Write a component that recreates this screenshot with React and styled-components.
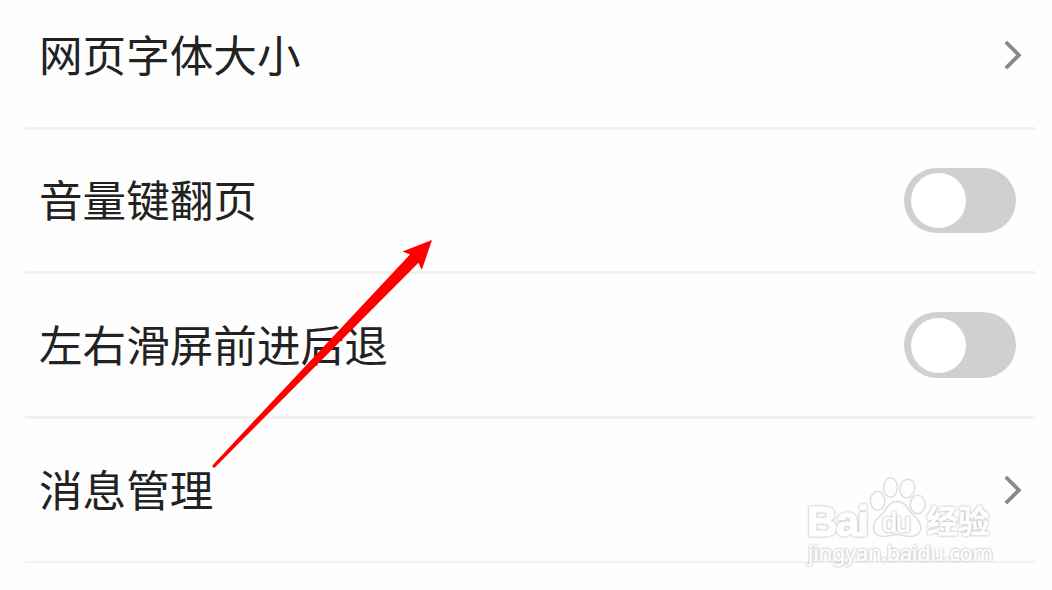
import React from "react";
import styled, { createGlobalStyle } from "styled-components";

const rows = [
  { label: "网页字体大小", type: "link", height: 130, padBottom: 17, line: 3 },
  { label: "音量键翻页", type: "switch", height: 144, padBottom: 0, line: 3, size: 65 },
  { label: "左右滑屏前进后退", type: "switch", height: 145, padBottom: 0, line: 3, size: 66 },
  { label: "消息管理", type: "link", height: 144, padBottom: 0, line: 2 },
];

function Chevron() {
  return (
    <ChevronStyled viewBox="0 0 20 32">
      <path d="M2.8 3L15.9 16.2L2.8 29.2" />
    </ChevronStyled>
  );
}

function Arrow() {
  return (
    <ArrowStyled viewBox="0 0 222 230">
      <path d="M0.4 225.4L198 14.5L190.5 11.6L220 0L209.8 30L206.5 22.8L2.8 227.4Q0.6 228.6 0.4 225.4Z" />
    </ArrowStyled>
  );
}

function Watermark() {
  return (
    <WatermarkStyled viewBox="0 0 200 100">
      <text className="brand" x="15" y="65.5" textLength="62">
        Bai
      </text>
      <ellipse cx="85.6" cy="30.8" rx="7.3" ry="9.5" />
      <ellipse cx="98.5" cy="17.5" rx="7" ry="9.7" />
      <ellipse cx="115.4" cy="18.5" rx="7.3" ry="9.4" transform="rotate(10 115.4 18.5)" />
      <ellipse cx="125.7" cy="34.5" rx="7.5" ry="9.2" />
      <path d="M105 31.5C98 31.5 95 37 92 42C89 46 84 48 82 54C80 61 84 66.5 91 66.5C97 66.5 100 64.5 105 64.5C110 64.5 113 67 119 66.5C128 65.5 130 59 128 54C126 48 120 45 117 40C114 35 111 31.5 105 31.5Z" />
      <text className="du" x="90" y="61.5" textLength="29">
        du
      </text>
      <text className="zh" x="134.5" y="63" textLength="63">
        经验
      </text>
      <text className="site" x="16" y="91" textLength="185">
        jingyan.baidu.com
      </text>
    </WatermarkStyled>
  );
}

function App() {
  return (
    <Page>
      <GlobalStyle />
      <List>
        {rows.map((row) => (
          <Row
            key={row.label}
            $height={row.height}
            $padBottom={row.padBottom}
            $line={row.line}
          >
            <Label>{row.label}</Label>
            {row.type === "link" ? (
              <Chevron />
            ) : (
              <Switch $size={row.size}>
                <Knob />
              </Switch>
            )}
          </Row>
        ))}
      </List>
      <Watermark />
      <Arrow />
    </Page>
  );
}

const GlobalStyle = createGlobalStyle`
  body {
    margin: 0;
    background: #fefefe;
  }
`;

const Page = styled.div`
  position: relative;
  width: 1052px;
  height: 590px;
  overflow: hidden;
  background: #fefefe;
  font-family: "Noto Sans CJK SC", sans-serif;
`;

const List = styled.div`
  display: flex;
  flex-direction: column;
  padding: 0 17px 0 25px;
`;

const Row = styled.div`
  box-sizing: border-box;
  display: flex;
  align-items: center;
  justify-content: space-between;
  height: ${(props) => props.$height}px;
  padding: 0 12px ${(props) => props.$padBottom}px 14px;
  border-bottom: ${(props) => props.$line}px solid #f1f1f1;
`;

const Label = styled.span`
  padding-bottom: 5px;
  font-size: 43.6px;
  line-height: 60px;
  color: #222;
  white-space: nowrap;
`;

const Switch = styled.div`
  box-sizing: border-box;
  display: flex;
  align-items: center;
  width: 112px;
  height: ${(props) => props.$size}px;
  margin-right: 7px;
  padding-left: 7px;
  border-radius: 33px;
  background: #d0d0d0;
`;

const Knob = styled.div`
  width: 55px;
  height: 55px;
  border-radius: 50%;
  background: #fff;
`;

const ChevronStyled = styled.svg`
  width: 20px;
  height: 32px;
  fill: none;
  stroke: #888;
  stroke-width: 3.8;
`;

const ArrowStyled = styled.svg`
  position: absolute;
  left: 212px;
  top: 240px;
  width: 222px;
  height: 230px;
  fill: #f00;
`;

const WatermarkStyled = styled.svg`
  position: absolute;
  left: 792px;
  top: 470px;
  width: 200px;
  height: 100px;
  overflow: visible;
  fill: #fefefe;
  stroke: #dedede;
  stroke-width: 1.5;
  text {
    font-family: "Liberation Sans", sans-serif;
    stroke: #fefefe;
    stroke-linejoin: round;
    filter: drop-shadow(0 0 0.8px #a4a4a4);
  }
  .brand {
    font-size: 42px;
    font-weight: 700;
    stroke-width: 1.6;
  }
  .du {
    font-size: 27px;
    stroke-width: 0.8;
  }
  .zh {
    font-family: "Noto Sans CJK SC", sans-serif;
    font-size: 31.5px;
    font-weight: 700;
    stroke-width: 0.6;
  }
  .site {
    font-family: "Noto Sans", sans-serif;
    font-size: 22px;
    stroke-width: 0.6;
  }
`;

export default App;
